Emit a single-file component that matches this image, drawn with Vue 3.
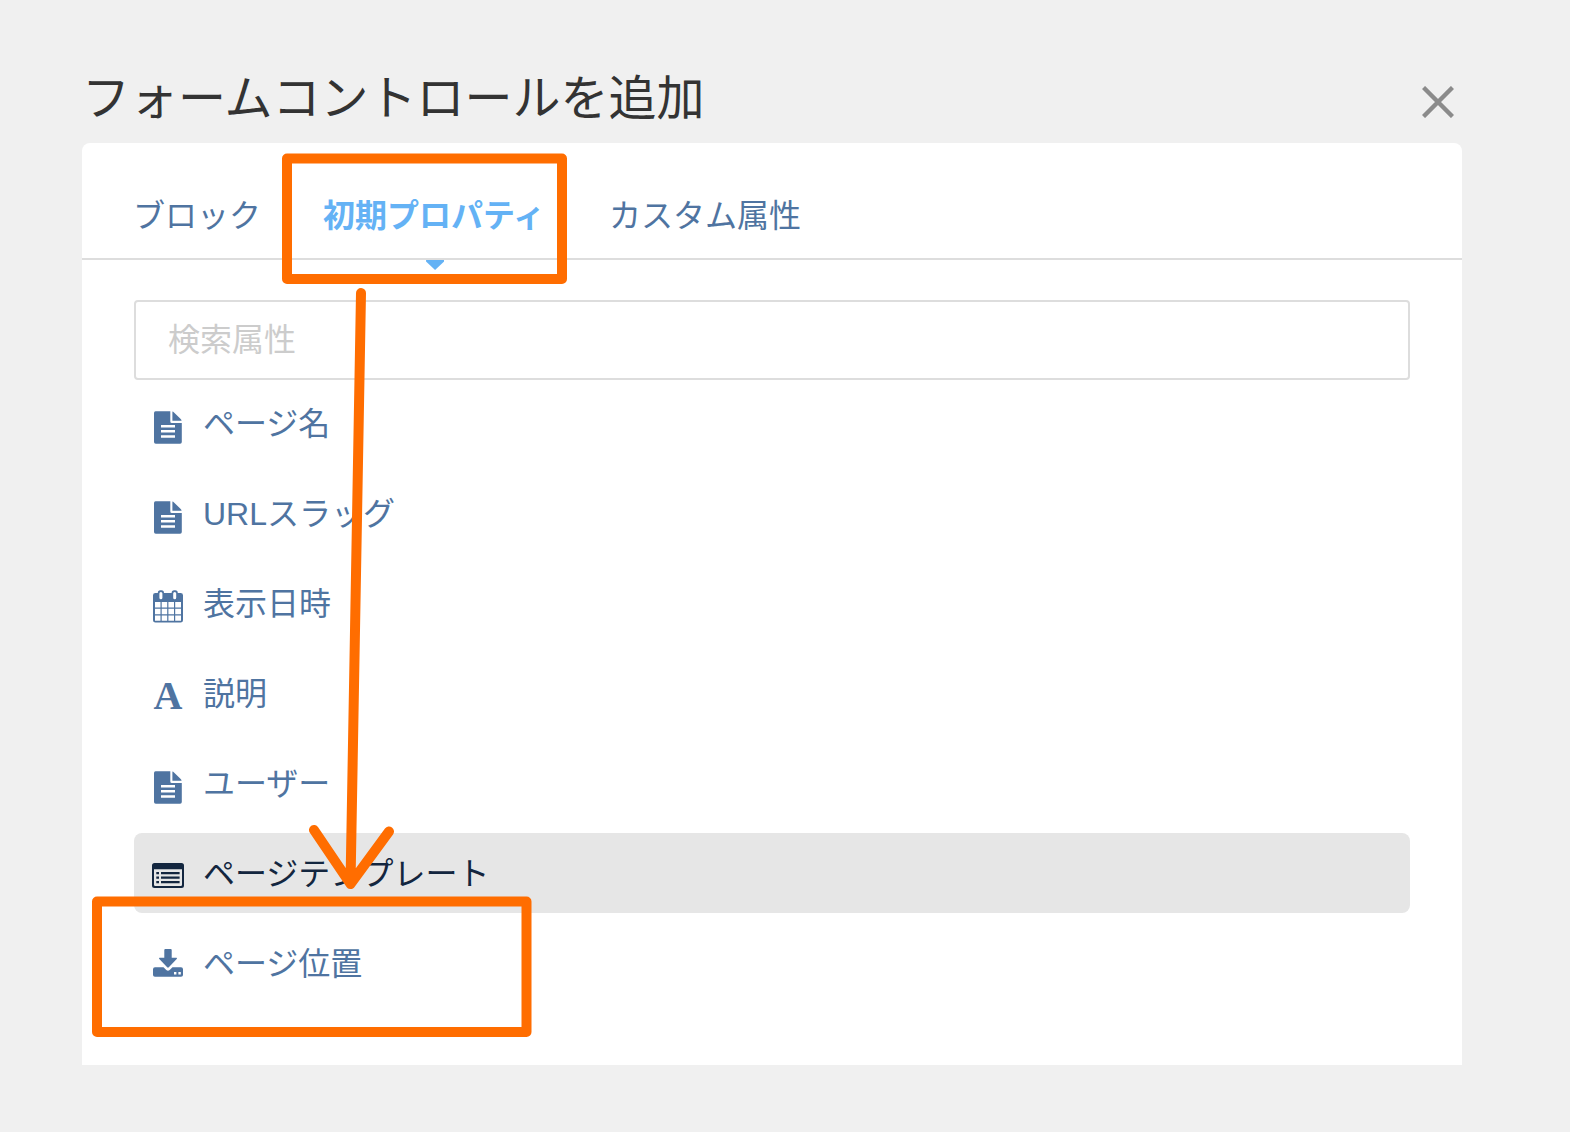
<script setup>
import {ref} from 'vue'

const tabs = ['ブロック', '初期プロパティ', 'カスタム属性']
const activeTab = ref('初期プロパティ')
const query = ref('')

const items = [
  {name: 'ページ名', icon: 'doc'},
  {name: 'URLスラッグ', icon: 'doc'},
  {name: '表示日時', icon: 'calendar'},
  {name: '説明', icon: 'letter'},
  {name: 'ユーザー', icon: 'doc'},
  {name: 'ページテンプレート', icon: 'template'},
  {name: 'ページ位置', icon: 'download'},
]
const selected = ref('ページテンプレート')
</script>

<template>
  <div class="page">
    <header class="title-bar">
      <h1>フォームコントロールを追加</h1>
      <button class="close" type="button" aria-label="閉じる">
        <svg width="32" height="32" viewBox="0 0 32 32">
          <path d="M1.5 1.5L30.5 30.5M30.5 1.5L1.5 30.5" stroke="#8b8b8b" stroke-width="4.4"/>
        </svg>
      </button>
    </header>

    <main class="panel">
      <nav class="tabs">
        <button
            v-for="tab in tabs"
            :key="tab"
            type="button"
            class="tab"
            :class="{ active: tab === activeTab }"
            @click="activeTab = tab"
        >{{ tab }}</button>
      </nav>

      <div class="content">
        <input v-model="query" class="search" type="text" placeholder="検索属性" aria-label="検索属性">

        <ul class="items">
          <li v-for="item in items" :key="item.name">
            <button
                type="button"
                class="item"
                :class="{ selected: item.name === selected }"
                @click="selected = item.name"
            >
              <span v-if="item.icon === 'letter'" class="icon letter" aria-hidden="true">A</span>
              <svg v-else class="icon" width="32" height="36" viewBox="0 0 32 36" aria-hidden="true">
                <g v-if="item.icon === 'doc'" fill="currentColor">
                  <path fill-rule="evenodd" d="M3.5 3.3H18.3V13.5Q18.3 15 19.8 15H29.8V34Q29.8 35.7 28.1 35.7H3.8Q2 35.7 2 34V5Q2 3.3 3.5 3.3ZM9 17V19.5H23V17ZM9 22.1V24.6H23V22.1ZM9 27.2V29.7H23V27.2Z"/>
                  <path d="M20.4 3.5Q21.3 3.7 22 4.4L28.7 11.1Q29.4 11.8 29.6 12.7H20.4Z"/>
                </g>
                <path
                    v-else-if="item.icon === 'calendar'"
                    fill="currentColor"
                    fill-rule="evenodd"
                    d="M3.4 5H5.8V4.9Q5.8 2.3 8.3 2.3H9.5Q12 2.3 12 4.9V5H19.6V4.9Q19.6 2.3 22.1 2.3H23.3Q25.8 2.3 25.8 4.9V5H28.6Q31 5 31 7.3V32.3Q31 34.6 28.6 34.6H3.4Q1 34.6 1 32.3V7.3Q1 5 3.4 5ZM7.4 5.4V9.8Q7.4 11.3 8.9 11.3Q10.4 11.3 10.4 9.8V5.4Q10.4 3.9 8.9 3.9Q7.4 3.9 7.4 5.4ZM21.2 5.4V9.8Q21.2 11.3 22.7 11.3Q24.2 11.3 24.2 9.8V5.4Q24.2 3.9 22.7 3.9Q21.2 3.9 21.2 5.4ZM3 14V19.5H8.5V14ZM9.7 14V19.5H15.2V14ZM16.4 14V19.5H22V14ZM23.2 14V19.5H29V14ZM3 20.7V26.2H8.5V20.7ZM9.7 20.7V26.2H15.2V20.7ZM16.4 20.7V26.2H22V20.7ZM23.2 20.7V26.2H29V20.7ZM3 27.4V32.8H8.5V27.4ZM9.7 27.4V32.8H15.2V27.4ZM16.4 27.4V32.8H22V27.4ZM23.2 27.4V32.8H29V27.4Z"
                />
                <g v-else-if="item.icon === 'template'" fill="currentColor">
                  <path fill-rule="evenodd" d="M2.5 5H29.5Q32 5 32 7.5V27.5Q32 30 29.5 30H2.5Q0 30 0 27.5V7.5Q0 5 2.5 5ZM2 11.3V26.8Q2 28 3.2 28H28.8Q30 28 30 26.8V11.3Z"/>
                  <path d="M4.3 14H7V16.2H4.3ZM4.3 18.5H7V20.7H4.3ZM4.3 23H7V25.2H4.3ZM9 14H27.6V16.2H9ZM9 18.5H27.6V20.7H9ZM9 23H27.6V25.2H9Z"/>
                </g>
                <g v-else fill="currentColor">
                  <path d="M13.3 1H18.7Q19.7 1 19.7 2V9.8H24.2Q25.6 9.8 24.7 10.9L16.8 19.3Q16 20 15.2 19.3L7.3 10.9Q6.4 9.8 7.8 9.8H12.3V2Q12.3 1 13.3 1Z"/>
                  <path fill-rule="evenodd" d="M3 19.3H11.5L14.3 22Q16 23.3 17.7 22L20.5 19.3H29Q31 19.3 31 21.3V27Q31 28.8 29 28.8H3Q1 28.8 1 27V21.3Q1 19.3 3 19.3ZM22 24V26.4H24.4V24ZM26.4 24V26.4H28.8V24Z"/>
                </g>
              </svg>
              <span class="name">{{ item.name }}</span>
            </button>
          </li>
        </ul>
      </div>
    </main>

    <!-- guide marks drawn over the dialog -->
    <svg class="marks" width="580" height="1060" viewBox="0 0 580 1060" aria-hidden="true">
      <rect x="287" y="158.5" width="275" height="120.5"/>
      <rect x="97" y="901.5" width="429.5" height="130.5"/>
      <path d="M361 293L350.5 884M314 830L350.5 884L389 831.5"/>
    </svg>
  </div>
</template>

<style>
body {
  margin: 0;
  background: #f0f0f0;
}
</style>

<style scoped>
.page {
  position: relative;
  box-sizing: border-box;
  min-height: 100vh;
  padding: 55px 108px 67px 82px;
  font-family: "Liberation Sans", "Noto Sans CJK JP", sans-serif;
  font-size: 32px;
  color: #4f74a1;
}

button {
  padding: 0;
  border: 0;
  background: none;
  color: inherit;
  font: inherit;
  cursor: pointer;
}

.title-bar {
  display: flex;
  align-items: center;
  justify-content: space-between;
  height: 88px;
  padding-right: 8px;
}

h1 {
  margin: 0;
  color: #333;
  font-size: 48px;
  font-weight: 400;
  line-height: 64px;
}

.close {
  display: flex;
  margin-top: 6px;
}

.panel {
  min-height: 922px;
  border-radius: 8px 8px 0 0;
  background: #fff;
}

.tabs {
  display: flex;
  gap: 60px;
  height: 115px;
  padding: 0 51px;
  border-bottom: 2px solid #ddd;
}

.tab {
  position: relative;
  padding-top: 30px;
  line-height: 32px;
}

.tab.active {
  padding-right: 4px;
  padding-left: 2px;
  color: #64b2f5;
  font-weight: 700;
}

.tab.active::after {
  content: "";
  position: absolute;
  top: 117px;
  left: 50%;
  width: 18px;
  height: 10px;
  margin-left: -9px;
  background: #64b2f5;
  clip-path: polygon(0 0, 100% 0, 100% 15%, 50% 100%, 0 15%);
}

.content {
  padding: 40px 52px 0;
}

.search {
  display: block;
  box-sizing: border-box;
  width: 100%;
  height: 80px;
  padding: 0 32px;
  border: 2px solid #ddd;
  border-radius: 4px;
  background: #fff;
  color: #4f74a1;
  font: inherit;
}

.search::placeholder {
  color: #ccc;
  opacity: 1;
}

.items {
  display: grid;
  gap: 10px;
  margin: 3px 0 0;
  padding: 0;
  list-style: none;
}

.item {
  display: flex;
  align-items: center;
  gap: 19px;
  width: 100%;
  height: 80px;
  padding: 0 18px;
  border-radius: 8px;
  text-align: left;
}

.item.selected {
  background: #e6e6e6;
  color: #13263f;
}

.icon {
  flex: none;
  width: 32px;
  margin-top: 6px;
}

.letter {
  font-family: "Liberation Serif", serif;
  font-size: 40px;
  font-weight: 700;
  line-height: 48px;
  text-align: center;
}

.name {
  padding-top: 2px;
  line-height: 48px;
}

.marks {
  position: absolute;
  top: 0;
  left: 0;
  fill: none;
  stroke: #ff6d00;
  stroke-width: 10;
  stroke-linecap: round;
  stroke-linejoin: round;
  pointer-events: none;
}
</style>
